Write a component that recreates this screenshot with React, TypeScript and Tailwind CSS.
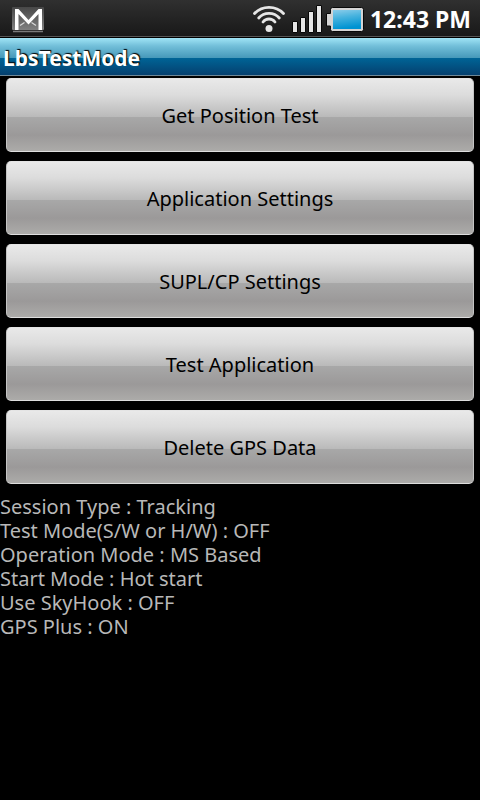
const actions = [
  'Get Position Test',
  'Application Settings',
  'SUPL/CP Settings',
  'Test Application',
  'Delete GPS Data',
];

const settings = [
  'Session Type : Tracking',
  'Test Mode(S/W or H/W) : OFF',
  'Operation Mode : MS Based',
  'Start Mode : Hot start',
  'Use SkyHook : OFF',
  'GPS Plus : ON',
];

function MailIcon() {
  return (
    <svg width="34" height="28" viewBox="0 0 34 28" aria-label="New mail" role="img">
      <defs>
        <linearGradient id="mail" x1="0" y1="0" x2="0" y2="1">
          <stop offset="0" stopColor="#484848" />
          <stop offset="1" stopColor="#808080" />
        </linearGradient>
      </defs>
      <rect x="1" y="2" width="32" height="23" rx="1" fill="url(#mail)" />
      <path d="M2 26.500H32" stroke="#7a7a7a" strokeWidth="1.500" />
      <path d="M9 20.500 13.500 17.500M25 20.500 20.500 17.500" stroke="#d8d8d8" strokeWidth="1.300" />
      <path d="M4 25V4H7.500L17.500 15 27.500 4H31V25H27.500V9L17.500 19.500 7.500 9V25Z" fill="#fff" />
    </svg>
  );
}

function WifiIcon() {
  return (
    <svg width="34" height="30" viewBox="0 0 34 30" aria-label="Wi-Fi" role="img">
      <g fill="none" stroke="#e6e6e6" strokeWidth="2.800" strokeLinecap="round">
        <path d="M2.500 9.500C10 1.300 24 1.300 31.500 9.500" />
        <path d="M6.700 14C12 7.800 22 7.800 27.300 14" />
        <path d="M11 18C14 14 20 14 23 18" />
      </g>
      <circle cx="17" cy="24.500" r="3.500" fill="#e6e6e6" />
    </svg>
  );
}

function SignalIcon() {
  return (
    <svg width="30" height="28" viewBox="0 0 30 28" aria-label="Signal" role="img">
      <g fill="#e6e6e6" stroke="#080808" strokeWidth="1">
        <path d="M.5 16.500h5v11h-5zM8.500 12.500h5v15h-5zM16.500 6.500h5v21h-5zM24.500.5h5v27h-5z" />
      </g>
    </svg>
  );
}

function BatteryIcon() {
  return (
    <svg width="38" height="26" viewBox="0 0 38 26" aria-label="Battery full" role="img">
      <defs>
        <linearGradient id="charge" x1="0" y1="0" x2="0.200" y2="1">
          <stop offset="0" stopColor="#8ccdea" />
          <stop offset="0.450" stopColor="#45b2de" />
          <stop offset="1" stopColor="#0093d2" />
        </linearGradient>
      </defs>
      <path d="M4.500 3.500Q4.500 1.500 6.500 1.500H35.500Q37.500 1.500 37.500 3.500V23.500Q37.500 25.500 35.500 25.500H6.500Q4.500 25.500 4.500 23.500V20H.5V7.500H4.500Z" fill="#d4d4d4" stroke="#080808" />
      <rect x="7" y="4" width="28" height="19" fill="url(#charge)" />
    </svg>
  );
}

export default function App() {
  return (
    <div className="min-h-screen bg-black font-['Noto_Sans',sans-serif]">
      <header className="flex h-[38px] items-center justify-between border-b border-black bg-linear-to-b from-[#303030] to-[#181818] pl-[11px] pr-[9px] pt-px shadow-[inset_0_-1px_0_#555]">
        <MailIcon />
        <div className="flex items-center">
          <WifiIcon />
          <div className="ml-1.5 flex items-center gap-1">
            <SignalIcon />
            <BatteryIcon />
          </div>
          <time className="ml-1.5 whitespace-nowrap text-[23px] leading-8 font-bold text-white">12:43 PM</time>
        </div>
      </header>
      <h1 className="flex h-[38px] items-center border-b border-[#6e8796] bg-[linear-gradient(to_bottom,#a0e4f5_0px,#72bfd9_8px,#4698b9_20px,#006496_20px,#05406f_37px)] px-[3px] pt-0.5 text-[21px] leading-6 font-bold text-white [text-shadow:1px_-1px_1px_#000]">
        LbsTestMode
      </h1>
      <main>
        <div className="flex flex-col gap-[9px] px-1.5 pt-0.5">
          {actions.map((label) => (
            <button
              key={label}
              type="button"
              className="h-[74px] rounded-[5px] border border-[#c4c4c4] border-t-[#e4e4e4] border-b-[#dedede] bg-[linear-gradient(to_bottom,#e9e9e9_0%,#dcdcdc_22%,#b9b9b9_53%,#a8a8a8_53%,#9b9999_78%,#acaba9_100%)] pt-0.5 text-[20px] leading-6 text-black"
            >
              {label}
            </button>
          ))}
        </div>
        <ul className="pt-[11px] text-[20px] leading-6 text-[#b8b8b8]">
          {settings.map((line) => (
            <li key={line}>{line}</li>
          ))}
        </ul>
      </main>
    </div>
  );
}
